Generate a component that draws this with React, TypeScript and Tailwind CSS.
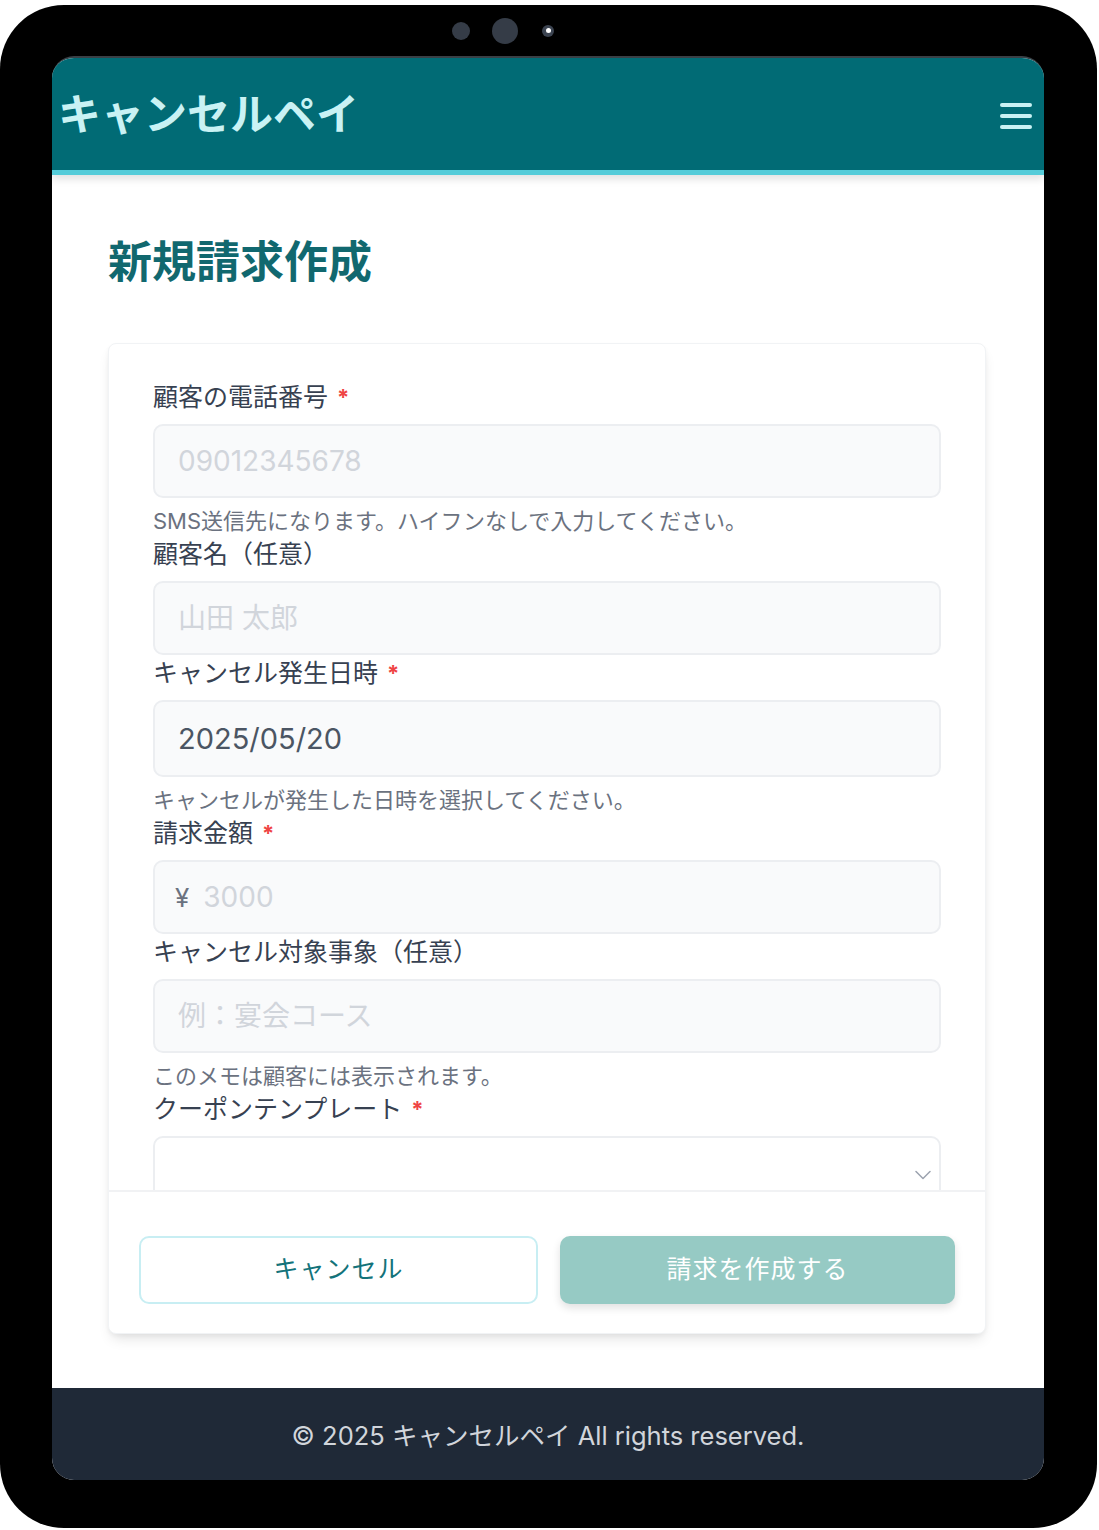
import React from "react";

const FONT = { fontFamily: 'Inter, "Noto Sans CJK JP", "Noto Sans", sans-serif' };

function Label({ text, required }: { text: string; required?: boolean }) {
  return (
    <div className="flex items-center h-[36px] mb-[9px] text-[25px] leading-[36px] text-[#374151]">
      <span>{text}</span>
      {required && <span className="ml-[9px] text-[22px] text-[#ef4444] font-bold">*</span>}
    </div>
  );
}

function Help({ text }: { text: string }) {
  return <p className="mt-[8px] h-[30px] text-[22px] leading-[30px] text-[#6b7280]">{text}</p>;
}

function TextInput({ placeholder, value, h = "h-[74px]", size = "text-[28px]" }: { placeholder?: string; value?: string; h?: string; size?: string }) {
  return (
    <input
      readOnly
      placeholder={placeholder}
      value={value ?? ""}
      className={`block w-full ${h} rounded-[10px] border-2 border-[#eceef1] bg-[#f9fafb] px-[23px] ${size} text-[#4b5563] placeholder:text-[#d1d5db] outline-none`}
    />
  );
}

export default function App() {
  return (
    <div className="w-[1099px] h-[1530px] bg-white overflow-hidden" style={FONT}>
      <div className="mt-[5px] w-[1097px] h-[1523px] rounded-[64px] bg-black flex flex-col">
        {/* camera bezel */}
        <div className="h-[51px] flex items-center pl-[452px] gap-[22px]">
          <div className="w-[18px] h-[18px] rounded-full bg-[#353c47]" />
          <div className="w-[26px] h-[26px] rounded-full bg-[#353c47]" />
          <div className="ml-[2px] w-[12px] h-[12px] rounded-full bg-[#3b4350] flex items-center justify-center">
            <div className="w-[5px] h-[5px] rounded-full bg-white" />
          </div>
        </div>
        {/* screen */}
        <div className="ml-[52px] w-[992px] h-[1424px] rounded-[22px] overflow-hidden bg-white flex flex-col border-t-2 border-[#3a4046]">
          <header className="h-[117px] shrink-0 bg-[#016b75] border-b-[5px] border-[#55ccd9] shadow-[0_4px_8px_rgba(0,0,0,0.12)] flex items-center justify-between pl-[6px] pr-[12px] relative z-10">
            <h1 className="text-[43px] font-bold leading-none text-[#c9f2f4]">キャンセルペイ</h1>
            <button className="mt-[4px] w-[32px] h-[26px] flex flex-col justify-between items-stretch">
              <span className="block h-[4px] rounded-full bg-[#c9f2f4]" />
              <span className="block h-[4px] rounded-full bg-[#c9f2f4]" />
              <span className="block h-[4px] rounded-full bg-[#c9f2f4]" />
            </button>
          </header>

          <main className="flex-1 pl-[56px] pr-[58px] pt-[55px]">
            <h2 className="text-[44px] font-bold leading-[64px] text-[#11686f]">新規請求作成</h2>

            <div className="mt-[49px] w-[878px] rounded-[8px] bg-white border border-[#f1f3f5] shadow-[0_8px_14px_-4px_rgba(0,0,0,0.12),0_2px_4px_rgba(0,0,0,0.04)]">
              <div className="h-[846px] overflow-hidden px-[44px] pt-[35px]">
                <Label text="顧客の電話番号" required />
                <TextInput placeholder="09012345678" />
                <Help text="SMS送信先になります。ハイフンなしで入力してください。" />

                <Label text="顧客名（任意）" />
                <TextInput placeholder="山田 太郎" />

                <Label text="キャンセル発生日時" required />
                <TextInput value="2025/05/20" h="h-[77px]" size="text-[29px]" />
                <Help text="キャンセルが発生した日時を選択してください。" />

                <Label text="請求金額" required />
                <div className="flex items-center w-full h-[74px] rounded-[10px] border-2 border-[#eceef1] bg-[#f9fafb] pl-[20px]">
                  <span className="text-[26px] text-[#6b7280] mr-[14px]">¥</span>
                  <input readOnly placeholder="3000" className="flex-1 bg-transparent text-[28px] placeholder:text-[#d1d5db] outline-none" />
                </div>

                <Label text="キャンセル対象事象（任意）" />
                <TextInput placeholder="例：宴会コース" />
                <Help text="このメモは顧客には表示されます。" />

                <Label text="クーポンテンプレート" required />
                <div className="w-full h-[74px] rounded-[10px] border-2 border-[#eceef1] bg-white flex items-center justify-end pr-[8px]">
                  <svg width="16" height="10" viewBox="0 0 16 10" fill="none" className="mt-[4px]">
                    <path d="M1 1.5 L8 8.5 L15 1.5" stroke="#9ca3af" strokeWidth="1.5" strokeLinecap="round" strokeLinejoin="round" />
                  </svg>
                </div>
              </div>
              <div className="border-t-2 border-[#f1f2f4] px-[30px] pt-[44px] pb-[29px] flex gap-[22px]">
                <button className="flex-1 h-[68px] rounded-[10px] border-2 border-[#c8eef3] bg-white text-[25px] text-[#13737a] tracking-[1px]">キャンセル</button>
                <button className="flex-1 h-[68px] rounded-[10px] bg-[#96cac4] text-[25px] text-white tracking-[1px] shadow-[0_4px_8px_rgba(0,0,0,0.12)]">請求を作成する</button>
              </div>
            </div>
          </main>

          <footer className="h-[92px] shrink-0 bg-[#1f2937] flex items-center justify-center">
            <p className="mt-[4px] text-[25.5px] text-[#d1d5db]">© 2025 キャンセルペイ All rights reserved.</p>
          </footer>
        </div>
      </div>
    </div>
  );
}
